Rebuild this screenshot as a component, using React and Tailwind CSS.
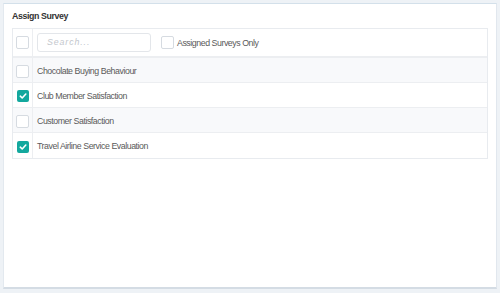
import React from "react";

function Box({ checked }) {
  if (checked) {
    return (
      <span className="flex h-[12px] w-[12px] items-center justify-center rounded-[2px] bg-[#13a89e]">
        <svg width="8" height="8" viewBox="0 0 8 8" fill="none">
          <path d="M1.3 4.2 L3.2 6 L6.8 2" stroke="white" strokeWidth="1.6" strokeLinecap="round" strokeLinejoin="round" />
        </svg>
      </span>
    );
  }
  return <span className="block h-[13px] w-[13px] rounded-[2px] border border-[#d6dbe1] bg-white" />;
}

const rows = [
  { name: "Chocolate Buying Behaviour", checked: false },
  { name: "Club Member Satisfaction", checked: true },
  { name: "Customer Satisfaction", checked: false },
  { name: "Travel Airline Service Evaluation", checked: true },
];

export default function App() {
  return (
    <div className="h-[293px] w-[500px] bg-[#eef2f6] p-[3px] font-['Liberation_Sans',Arial,sans-serif]">
      <div className="h-[286px] w-[494px] border-t border-t-[#d3e0ea] border-r border-r-[#e1e7ee] border-b-2 border-b-[#d4dce4] border-l border-l-[#e3e9ef] bg-white px-[8px]">
        <div className="pt-[3px] text-[8.8px] font-bold leading-[18px] tracking-[-0.4px] text-[#333]">Assign Survey</div>
        <div className="mt-[3px] w-[476px] border border-[#e8ebef]">
          <div className="flex h-[29px] items-center border-b-2 border-[#eceef1] bg-white">
            <div className="flex h-full w-[20px] items-center justify-center border-r border-[#eceef1]">
              <Box />
            </div>
            <div className="ml-[4px] flex h-[19px] w-[114px] items-center rounded-[3px] border border-[#e3e6ea] pl-[9px] text-[8.8px] italic tracking-[0.9px] text-[#c3c7cd]">
              Search...
            </div>
            <div className="ml-[10px] flex items-center">
              <Box />
              <span className="ml-[3px] pt-[2px] text-[8.8px] tracking-[-0.45px] text-[#5a5a5a]">Assigned Surveys Only</span>
            </div>
          </div>
          {rows.map((r, i) => (
            <div
              key={r.name}
              className={`flex h-[25px] items-center ${i < rows.length - 1 ? "border-b border-[#eceef1]" : ""} ${i % 2 === 0 ? "bg-[#f8f9fb]" : "bg-white"}`}
            >
              <div className="flex h-full w-[20px] items-center justify-center border-r border-[#eceef1] pt-[2px]">
                <Box checked={r.checked} />
              </div>
              <span className="ml-[4px] pt-[3px] text-[8.8px] tracking-[-0.45px] text-[#5a5a5a]">{r.name}</span>
            </div>
          ))}
        </div>
      </div>
    </div>
  );
}
